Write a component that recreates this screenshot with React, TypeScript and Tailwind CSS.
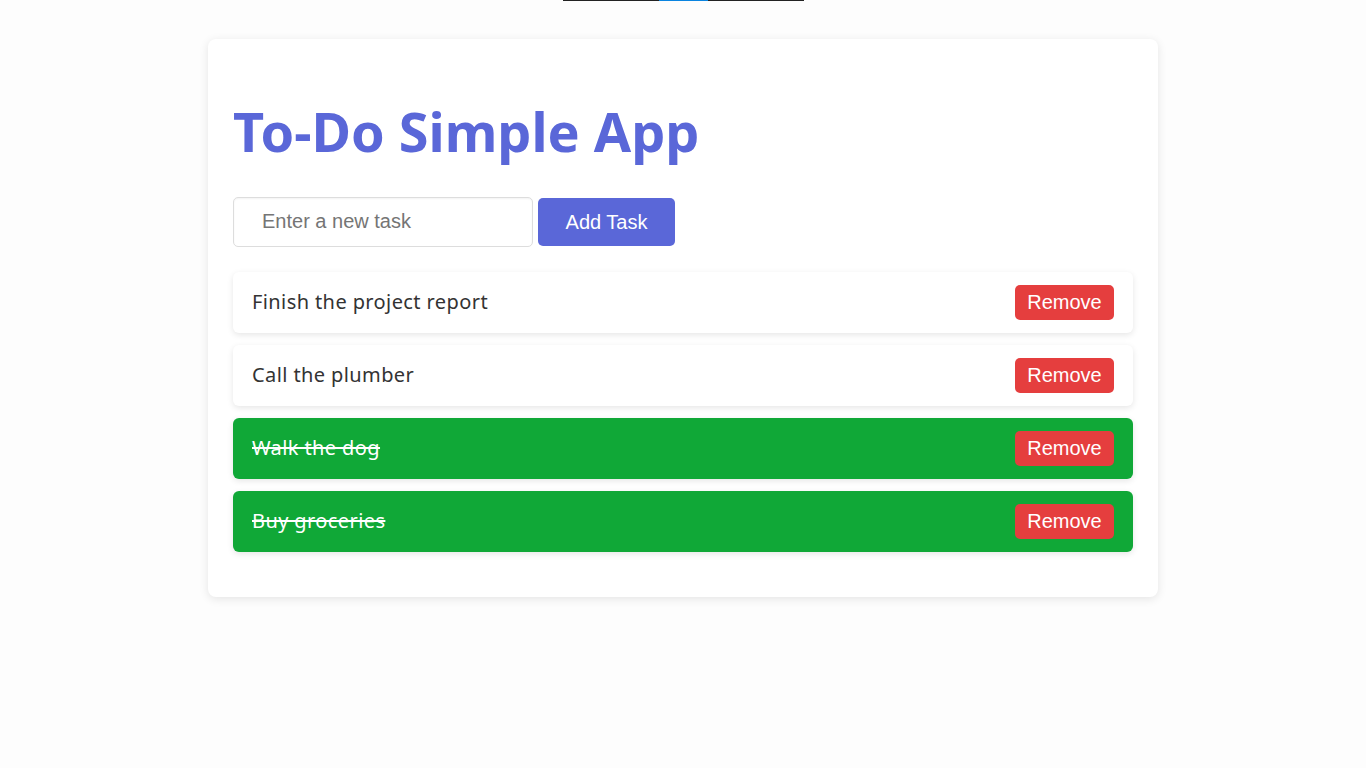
import { useState } from 'react';

type Task = { id: number; text: string; done: boolean };

const initial: Task[] = [
  { id: 1, text: 'Finish the project report', done: false },
  { id: 2, text: 'Call the plumber', done: false },
  { id: 3, text: 'Walk the dog', done: true },
  { id: 4, text: 'Buy groceries', done: true },
];

function TaskRow({ task, onToggle, onRemove }: { task: Task; onToggle: () => void; onRemove: () => void }) {
  return (
    <li
      onClick={onToggle}
      className={
        task.done
          ? 'flex items-center justify-between h-[61px] px-[19px] rounded-md bg-[#10a837] text-white shadow-[0_2px_6px_rgba(0,0,0,0.1)] cursor-pointer'
          : 'flex items-center justify-between h-[61px] px-[19px] rounded-md bg-white text-[#333] shadow-[0_2px_6px_rgba(0,0,0,0.1)] cursor-pointer'
      }
    >
      <span
        className={
          task.done
            ? "text-[20px] tracking-[0.4px] line-through font-['Noto_Sans',sans-serif]"
            : "text-[20px] tracking-[0.4px] font-['Noto_Sans',sans-serif]"
        }
      >
        {task.text}
      </span>
      <button
        onClick={(e) => {
          e.stopPropagation();
          onRemove();
        }}
        className="h-[35px] w-[99px] rounded-[5px] bg-[#e53e3e] text-white text-[20px] font-['Liberation_Sans',Arial,sans-serif]"
      >
        Remove
      </button>
    </li>
  );
}

export default function App() {
  const [tasks, setTasks] = useState<Task[]>(initial);
  const [text, setText] = useState('');

  const add = () => {
    if (!text.trim()) return;
    setTasks([...tasks, { id: Date.now(), text: text.trim(), done: false }]);
    setText('');
  };

  return (
    <div className="min-h-screen bg-[#fdfdfd] flex flex-col items-center">
      {/* top bar */}
      <div className="flex w-[241px] h-px">
        <div className="w-[96px] bg-[#222]" />
        <div className="w-[49px] bg-[#0a84e0]" />
        <div className="flex-1 bg-[#222]" />
      </div>

      <div className="mt-[38px] w-[950px] bg-white rounded-lg shadow-[0_2px_10px_rgba(0,0,0,0.1)] px-[25px] pt-[60px] pb-[45px]">
        <h1 className="text-[54px] leading-[1.2] font-bold text-[#5a67d8] font-['Noto_Sans',sans-serif]">
          To-Do Simple App
        </h1>

        <div className="mt-[33px] flex items-center gap-[5px]">
          <input
            value={text}
            onChange={(e) => setText(e.target.value)}
            placeholder="Enter a new task"
            className="h-[50px] w-[300px] rounded-[5px] border border-[#ddd] px-[28px] text-[20px] text-[#333] placeholder:text-[#757575] outline-none shadow-[inset_0_1px_2px_rgba(0,0,0,0.05)] font-['Liberation_Sans',Arial,sans-serif]"
          />
          <button
            onClick={add}
            className="h-[48px] w-[137px] rounded-[5px] bg-[#5a67d8] text-white text-[20px] font-['Liberation_Sans',Arial,sans-serif]"
          >
            Add Task
          </button>
        </div>

        <ul className="mt-[25px] flex flex-col gap-[12px]">
          {tasks.map((t) => (
            <TaskRow
              key={t.id}
              task={t}
              onToggle={() => setTasks(tasks.map((x) => (x.id === t.id ? { ...x, done: !x.done } : x)))}
              onRemove={() => setTasks(tasks.filter((x) => x.id !== t.id))}
            />
          ))}
        </ul>
      </div>
    </div>
  );
}
